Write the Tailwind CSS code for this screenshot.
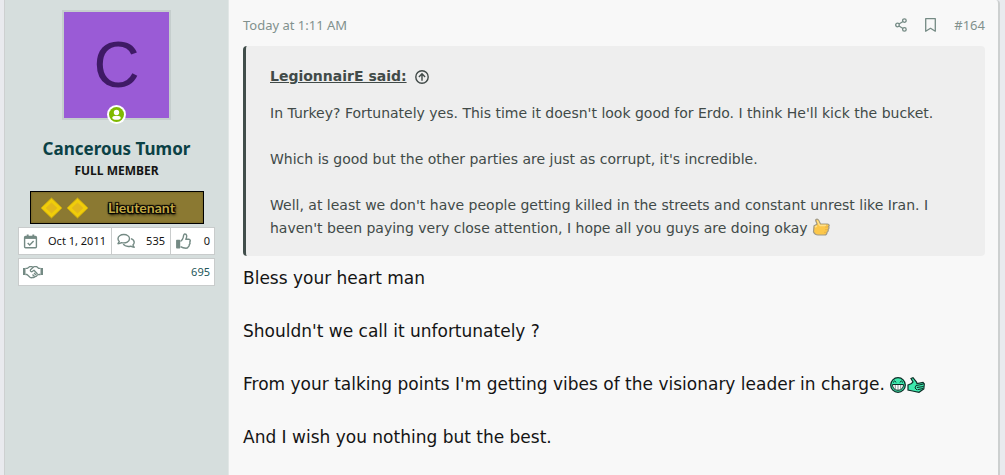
<!DOCTYPE html>
<html lang="en">

<head>
    <meta charset="UTF-8">
    <meta name="viewport" content="width=device-width, initial-scale=1.0">
    <title>Forum thread</title>
    <script src="https://cdn.jsdelivr.net/npm/@tailwindcss/browser@4"></script>
</head>

<body class="bg-[#e9eaee] font-['Noto_Sans',sans-serif] text-[#141414]">
    <article class="flex min-h-screen ml-1 mr-[5px] bg-[#f8f8f8] border-l border-r-2 border-[#cdd0d0] rounded-tr-sm">
        <!-- Member details -->
        <aside class="w-56 shrink-0 bg-[#d6dedd] border-r border-[#e2e7e6] px-[13px] pt-[10px]">
            <div class="relative w-[109px] mx-auto">
                <a href="#" class="flex items-center justify-center h-[110px] bg-[#9a5bd6] border-2 border-[#c5cecd] text-[#3f1a66] text-[64px] leading-none font-['Liberation_Sans',sans-serif]">C</a>
                <svg class="absolute left-[45px] top-[95px] w-[19px] h-[19px]" viewBox="0 0 19 19" role="img" aria-label="Online">
                    <circle cx="9.5" cy="9.5" r="9.5" fill="#fff" />
                    <circle cx="9.5" cy="9.5" r="7.5" fill="#7fb900" />
                    <circle cx="9.5" cy="7.4" r="2.7" fill="#fff" />
                    <ellipse cx="9.5" cy="12.8" rx="4.2" ry="2" fill="#fff" />
                </svg>
            </div>
            <h4 class="mt-[17px] text-center text-[17px] leading-6 font-bold"><a href="#" class="text-[#0b4145]">Cancerous Tumor</a></h4>
            <h5 class="text-center text-xs leading-5 font-bold">FULL MEMBER</h5>
            <div class="mt-[10px] ml-3 mr-[11px] h-[33px] flex items-center border border-black bg-[#8b7932] pl-[9px] shadow-[inset_0_0_2px_#66581f]">
                <svg class="w-[50px] h-[24px]" viewBox="0 0 50 24" fill="#f0cd0a" stroke="#c6a610">
                    <path d="M11.500 2L22 12L11.500 22L1 12Z" />
                    <path d="M37.500 2L48 12L37.500 22L27 12Z" />
                    <path d="M11.500 7L17 12L11.500 17L6 12ZM37.500 7L43 12L37.500 17L32 12Z" fill="#e2b81c" stroke="#e5bd18" />
                </svg>
                <span class="ml-[18px] text-sm leading-5 font-bold font-['Lato',sans-serif] text-[#c2a945] [text-shadow:1px_1px_1px_#000,-1px_-1px_1px_#000,1px_-1px_1px_#000,-1px_1px_1px_#000,1px_2px_3px_#000]">Lieutenant</span>
            </div>
            <dl class="mt-[3px] flex bg-white border border-[#c9cccc] text-[11px] h-7">
                <div class="flex flex-1 items-center justify-between pl-1 pr-[5px]">
                    <dt>
                        <svg class="w-[15px] h-[17px]" viewBox="0 0 16 17" fill="none" stroke="#748a84" stroke-width="1.500" role="img" aria-label="Joined">
                            <rect x="1.700" y="3.200" width="12.600" height="12" rx="1" />
                            <path d="M2 4.500h12" stroke-width="2.500" />
                            <path d="M5 1v3M11 1v3" stroke-width="2" />
                            <path d="M5 10l2.200 2.200L11.300 8" />
                        </svg>
                    </dt>
                    <dd>Oct 1, 2011</dd>
                </div>
                <div class="flex w-[59px] items-center justify-between border-l border-[#c9cccc] pl-[5px] pr-[5px]">
                    <dt>
                        <svg class="w-[18px] h-4" viewBox="0 0 18 16" fill="none" stroke="#748a84" stroke-width="1.400" stroke-linejoin="round" role="img" aria-label="Messages">
                            <path d="M6.800 1.500C3.500 1.500 1 3.300 1 5.700C1 6.900 1.500 7.800 2.300 8.500L1 10.700C2.600 10.700 3.700 10.200 4.500 9.700C9.200 10.600 12.500 8.500 12.500 5.700C12.500 3.300 10 1.500 6.800 1.500Z" />
                            <path d="M14 5.600C16 6.300 17.200 7.700 17.200 9.300C17.200 10.500 16.700 11.400 15.900 12L17.200 14.300C15.500 14.200 14.500 13.700 13.700 13.200C10.500 13.800 7.500 13 6.300 11" />
                        </svg>
                    </dt>
                    <dd>535</dd>
                </div>
                <div class="flex w-[44px] items-center justify-between border-l border-[#c9cccc] pl-[5px] pr-1">
                    <dt>
                        <svg class="w-[15px] h-4" viewBox="0 0 15 16" fill="none" stroke="#748a84" stroke-width="1.400" stroke-linejoin="round" role="img" aria-label="Reaction score">
                            <path d="M.800 7.500h2.700v7.300H.800Z" fill="#748a84" />
                            <path d="M4.500 8.500C6 7.500 7 5.800 7.300 4.200C7.500 2.500 7.600 1 8.800 1C11 1 11.200 3.500 9.800 6.300H12.800C14.500 6.300 14.600 8.300 13.700 9C14.300 10 14 11 13.200 11.700C13.400 12.700 13 13.500 12.200 13.800C12 15 11 15.200 10 15.200C7.200 15.200 6 14.600 4.500 13.700" />
                        </svg>
                    </dt>
                    <dd>0</dd>
                </div>
            </dl>
            <dl class="mt-[3px] flex items-center justify-between bg-white border border-[#c9cccc] h-7 pl-1 pr-1 text-[11px]">
                <dt>
                    <svg class="w-5 h-[14px]" viewBox="0 0 20 14" fill="none" stroke="#748a84" stroke-width="1.300" stroke-linejoin="round" role="img" aria-label="Trader rating">
                        <path d="M0 3h2.500v7H0ZM17.500 3H20v7h-2.500Z" fill="#748a84" stroke="none" />
                        <path d="M2.500 3.300H4.500L6.500 1.700H9L10 2.300L11 1.700H13.800L15.500 3.300H17.500M2.500 9.500H4L7 12.200C8 13 9 12.800 9.600 12.300C10.600 12.800 11.700 12.400 12 11.500C13 11.700 14 11 14 10.200L15.800 9.500H17.500" />
                        <path d="M10.500 2L7.500 4.800C6.800 6.500 8.500 7.200 9.600 6.300L11 5.200L14.500 9M9.500 9.500L11.500 11.500M11 8L13 10" />
                    </svg>
                </dt>
                <dd><a href="#" class="text-[#23575a]">695</a></dd>
            </dl>
        </aside>

        <!-- Message -->
        <div class="flex-1 min-w-0 px-[13px] pl-[14px] pt-[15px]">
            <header class="flex items-center justify-between text-[13px] leading-5 text-[#81918d]">
                <a href="#"><time>Today at 1:11 AM</time></a>
                <ul class="flex items-center">
                    <li>
                        <a href="#" aria-label="Share">
                            <svg class="w-3 h-[14px]" viewBox="0 0 12 14" fill="none" stroke="#748a84" stroke-width="1.300">
                                <circle cx="2.500" cy="7" r="1.800" />
                                <circle cx="9.400" cy="2.600" r="1.800" />
                                <circle cx="9.400" cy="11.400" r="1.800" />
                                <path d="M4 6L8 3.500M4 8L8 10.500" />
                            </svg>
                        </a>
                    </li>
                    <li class="ml-[18px]">
                        <a href="#" aria-label="Bookmark">
                            <svg class="w-[11px] h-[14px]" viewBox="0 0 11 14" fill="none" stroke="#748a84" stroke-width="1.300" stroke-linejoin="round">
                                <path d="M.700 .700H10.300V13.200L5.500 10.300L.700 13.200Z" />
                            </svg>
                        </a>
                    </li>
                    <li class="ml-[18px]"><a href="#">#164</a></li>
                </ul>
            </header>

            <div class="font-[Verdana,'DejaVu_Sans',sans-serif]">
                <blockquote class="mt-[11px] bg-[#eee] border-l-[3px] border-[#414e4b] rounded pl-6 pr-5 pt-[19px] pb-4 text-sm leading-[23px] text-[#414a48]">
                    <a href="#" class="flex items-center gap-2 font-bold">
                        <span class="underline">LegionnairE said:</span>
                        <svg class="w-[14px] h-[14px]" viewBox="0 0 14 14" fill="none" stroke="#414a48" stroke-width="1.400">
                            <circle cx="7" cy="7" r="6.200" />
                            <path d="M7 10.800V4M3.900 6.900L7 3.800L10.100 6.900" />
                        </svg>
                    </a>
                    <p class="mt-[14px]">In Turkey? Fortunately yes. This time it doesn't look good for Erdo. I think He'll kick the bucket.</p>
                    <p class="mt-[23px]">Which is good but the other parties are just as corrupt, it's incredible.</p>
                    <p class="mt-[23px]">Well, at least we don't have people getting killed in the streets and constant unrest like Iran. I haven't been paying very close attention, I hope all you guys are doing okay
                        <svg class="inline-block align-middle w-[18px] h-[19px] -mt-1" viewBox="0 0 18 19" role="img" aria-label="Thumbs up">
                            <path d="M2 8C3 7 4.500 7 5 6C4.500 4 3 2.500 4 1.500C5.500 .500 7 2 7.500 4L8.500 6H15.500C17.500 6 17.500 8 16.500 8.500C17.300 9.500 17 11 16 11.500C16.500 12.700 16 13.700 15 14.200C15 16 14 17 12.500 17H6C4 17 2.500 16 1.500 14Z" fill="#fcc74a" stroke="#a09a86" stroke-width="1.200" />
                            <path d="M5 3C6.500 3 6 6 8 7.500H14M3 9L5 8" fill="none" stroke="#ffe08a" stroke-width="1.500" />
                            <path d="M13 9h3M13 11.700h2.500M12 14.300h2.500" stroke="#eab245" />
                        </svg>
                    </p>
                </blockquote>

                <div class="mt-[9px] text-[17px] leading-[26px] text-[#141414]">
                    <p>Bless your heart man</p>
                    <p class="mt-[27px]">Shouldn't we call it unfortunately ?</p>
                    <p class="mt-[27px]">From your talking points I'm getting vibes of the visionary leader in charge.
                        <span class="inline-flex items-center align-middle">
                            <svg class="w-4 h-4" viewBox="0 0 16 16" role="img" aria-label="Grin">
                                <circle cx="8" cy="8" r="7.300" fill="#3deaae" stroke="#0c2e26" stroke-width="1.300" />
                                <path d="M3 5.500L4.700 4L6.300 5.500M9.700 5.500L11.300 4L13 5.500" fill="none" stroke="#0c2e26" />
                                <path d="M2.500 7.500H13.500C13.500 11 11.500 13.300 8 13.300S2.500 11 2.500 7.500Z" fill="#fff" stroke="#0c2e26" />
                                <path d="M5.300 8v4.500M8 8v5M10.700 8v4.500" stroke="#0c2e26" stroke-width=".500" />
                            </svg>
                            <svg class="ml-px w-[18px] h-4" viewBox="0 0 18 16" role="img" aria-label="Thumbs up">
                                <path d="M1 8L4.500 6.500L6 5L4 1.500L6 .700L9.500 5L10 6.500L16 5.500L17.300 7L16.800 12L12 15.300L5.500 14L1 13Z" fill="#3deaae" stroke="#0c2e26" stroke-width="1.200" />
                                <path d="M9 8.500L12 8L16.500 7M10 10.500L16.500 9.500M10.500 12.700L16 11.500M9 8.500L8 11L10 13" fill="none" stroke="#0c2e26" />
                            </svg>
                        </span>
                    </p>
                    <p class="mt-[27px]">And I wish you nothing but the best.</p>
                </div>
            </div>
        </div>
    </article>
</body>

</html>
